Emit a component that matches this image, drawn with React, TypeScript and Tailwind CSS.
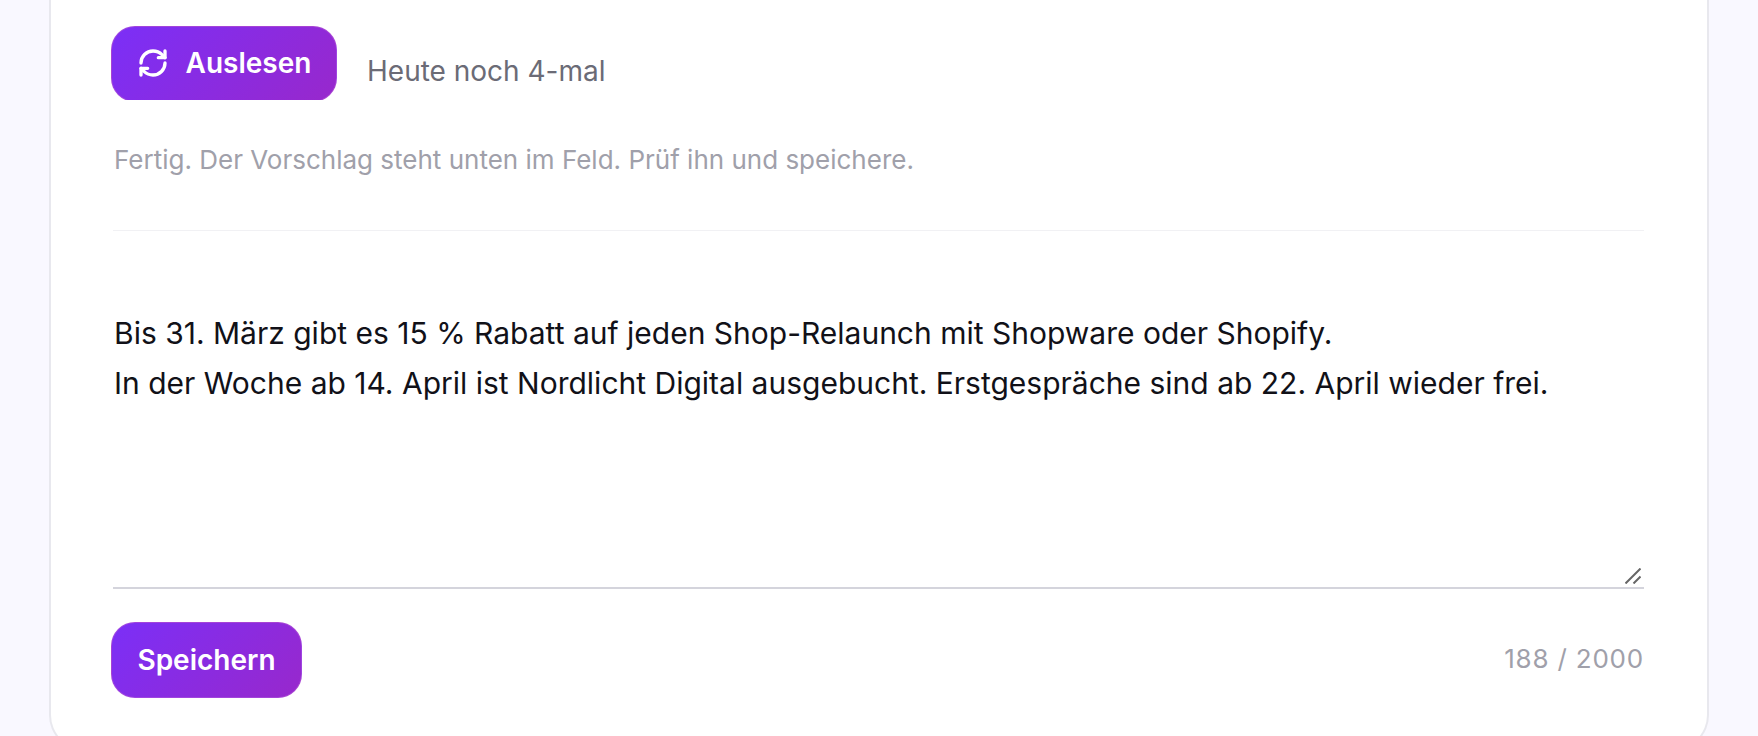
import { RefreshCw } from "lucide-react";

const gradient = "border border-[#b455d6]/60 bg-[linear-gradient(135deg,#7b2ff7,#9828cc)]";

export default function App() {
  return (
    <div className="h-[736px] overflow-hidden bg-[#f9f8ff] px-[49px] font-['Inter',sans-serif]">
      <div className="h-[751px] rounded-b-[36px] border-x-2 border-b-2 border-[#e8e8ee] bg-white pt-[26px] pr-[63px] pl-[62px]">
        <div className="flex items-start gap-[30px]">
          <div className="-ml-[2px] h-[74px] overflow-hidden">
            <button
              className={`flex h-[76px] w-[226px] items-center justify-center gap-[17px] rounded-[24px] pb-[2px] text-[28px] font-semibold text-white ${gradient}`}
              type="button"
            >
              <RefreshCw className="h-[32px] w-[32px]" strokeWidth={2.5} />
              Auslesen
            </button>
          </div>
          <span className="mt-[25px] text-[28px] leading-[40px] text-[#6b6b76]">Heute noch 4-mal</span>
        </div>

        <p className="mt-[41px] pl-[1px] text-[26px] leading-[38px] text-[#a0a0aa]">
          Fertig. Der Vorschlag steht unten im Feld. Prüf ihn und speichere.
        </p>

        <div className="mt-[51px] border-t border-[#f1f1f4]" />

        <div className="relative mt-[77px] h-[281px] border-b-2 border-[#d4d4dc] pl-[1px] text-[30px] leading-[50px] text-[#111118]">
          <p>Bis 31. März gibt es 15 % Rabatt auf jeden Shop-Relaunch mit Shopware oder Shopify.</p>
          <p>In der Woche ab 14. April ist Nordlicht Digital ausgebucht. Erstgespräche sind ab 22. April wieder frei.</p>
          <svg className="absolute right-[3px] bottom-[3px] h-[16px] w-[16px]" viewBox="0 0 16 16">
            <path d="M0.5 15.5 15.5 0.5M8.5 15.5 15.5 8.5" stroke="#666666" strokeWidth="2" />
          </svg>
        </div>

        <div className="mt-[33px] flex items-center justify-between">
          <button
            className={`-ml-[2px] h-[76px] w-[191px] rounded-[24px] text-[28px] font-semibold text-white ${gradient}`}
            type="button"
          >
            Speichern
          </button>
          <span className="mb-[3px] text-[26px] tracking-[0.8px] text-[#a0a0aa]">188 / 2000</span>
        </div>
      </div>
    </div>
  );
}
